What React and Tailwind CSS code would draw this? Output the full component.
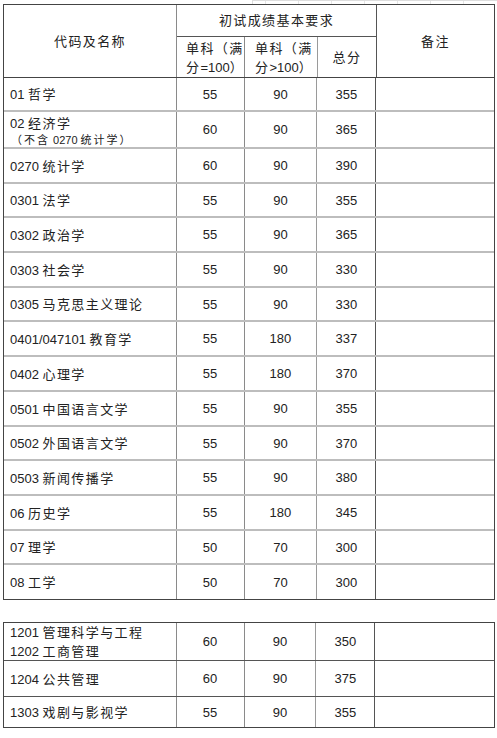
import React from "react";

const CJK = /([\u2E80-\u9FFF\uFF00-\uFFEF\u3000-\u303F]+)/;

function T({ s, tr = "tracking-[1.4px]" }) {
  return s.split(CJK).map((p, i) =>
    CJK.test(p) ? (
      <span key={i} className={tr}>
        {p}
      </span>
    ) : (
      <React.Fragment key={i}>{p}</React.Fragment>
    )
  );
}

const rows1 = [
  ["01 哲学", null, "55", "90", "355", "h-[34px]"],
  ["02 经济学", "（不含 0270 统计学）", "60", "90", "365", "h-[37px]"],
  ["0270 统计学", null, "60", "90", "390", "h-[35px]"],
  ["0301 法学", null, "55", "90", "355", "h-[34px]"],
  ["0302 政治学", null, "55", "90", "365", "h-[35px]"],
  ["0303 社会学", null, "55", "90", "330", "h-[35px]"],
  ["0305 马克思主义理论", null, "55", "90", "330", "h-[34px]"],
  ["0401/047101 教育学", null, "55", "180", "337", "h-[35px]"],
  ["0402 心理学", null, "55", "180", "370", "h-[35px]"],
  ["0501 中国语言文学", null, "55", "90", "355", "h-[35px]"],
  ["0502 外国语言文学", null, "55", "90", "370", "h-[34px]"],
  ["0503 新闻传播学", null, "55", "90", "380", "h-[35px]"],
  ["06 历史学", null, "55", "180", "345", "h-[35px]"],
  ["07 理学", null, "50", "70", "300", "h-[34px]"],
  ["08 工学", null, "50", "70", "300", "h-[35px]"],
];

const rows2 = [
  ["1201 管理科学与工程", "1202 工商管理", "60", "90", "350", "h-[38px]"],
  ["1204 公共管理", null, "60", "90", "375", "h-[36px]"],
  ["1303 戏剧与影视学", null, "55", "90", "355", "h-[31px]"],
];

function Row({ r, last, second }) {
  const [name, sub, a, b, c, h] = r;
  const sep = second
    ? last
      ? "border-b border-[#444]"
      : "border-b border-[#555]"
    : last
    ? "border-b border-[#444]"
    : "border-b-2 border-[#bdbdbd]";
  const small = sub && !second;
  return (
    <div className={`flex ${h} ${sep}`}>
      <div className="w-[173px] border-r border-[#8a8a8a] flex flex-col justify-center pl-[6px] pt-[1px] whitespace-nowrap">
        <div className="leading-[19px]">
          <T s={name} />
        </div>
        {sub && small && (
          <div className="text-[11px] leading-[14px] pl-[1px]">
            <T s={sub} tr="tracking-[2px]" />
          </div>
        )}
        {sub && !small && (
          <div className="leading-[19px]">
            <T s={sub} />
          </div>
        )}
      </div>
      <div className="w-[68px] border-r border-[#8a8a8a] flex items-center justify-center pt-[1px]">
        {a}
      </div>
      <div
        className={`${
          second ? "w-[72px]" : "w-[73px]"
        } border-r border-[#9a9a9a] flex items-center justify-center pt-[1px]`}
      >
        {b}
      </div>
      <div className="w-[59px] border-r border-[#555] flex items-center justify-center pt-[1px]">
        {c}
      </div>
      <div className={second ? "w-[119px]" : "w-[118px]"}></div>
    </div>
  );
}

export default function App() {
  return (
    <div
      className="w-[497px] h-[738px] bg-white overflow-hidden text-[13px] text-[#222]"
      style={{ fontFamily: '"Liberation Sans", "Noto Sans CJK SC", sans-serif' }}
    >
      {/* faint spreadsheet grid above */}
      <div className="h-[4px] flex pl-[252px]">
        <div className="flex-1 flex border-t border-l border-[#dedede]">
          <div className="w-[13px] border-r border-[#e6e6e6]"></div>
          <div className="w-[33px] border-r border-[#e6e6e6]"></div>
          <div className="w-[33px] border-r border-[#e6e6e6]"></div>
          <div className="w-[33px] border-r border-[#e6e6e6]"></div>
          <div className="w-[33px] border-r border-[#e6e6e6]"></div>
          <div className="w-[33px] border-r border-[#e6e6e6]"></div>
          <div className="w-[33px] border-r border-[#e6e6e6]"></div>
        </div>
      </div>

      {/* table 1 */}
      <div className="ml-[3px] w-[492px] border-l border-r border-t border-[#444]">
        <div className="flex h-[73px] border-b border-[#444]">
          <div className="w-[173px] border-r border-[#8a8a8a] flex items-center justify-center pt-[1px]">
            <T s="代码及名称" />
          </div>
          <div className="w-[200px] border-r border-[#555] flex flex-col">
            <div className="h-[34px] border-b border-[#555] flex items-center justify-center pt-[1px] whitespace-nowrap">
              <T s="初试成绩基本要求" />
            </div>
            <div className="flex-1 flex">
              <div className="w-[68px] border-r border-[#8a8a8a] pl-[9px] pt-[2px] leading-[19px] whitespace-nowrap">
                <div>
                  <T s="单科（满" />
                </div>
                <div>
                  <T s="分=100）" />
                </div>
              </div>
              <div className="w-[73px] border-r border-[#9a9a9a] pl-[10px] pt-[2px] leading-[19px] whitespace-nowrap">
                <div>
                  <T s="单科（满" />
                </div>
                <div>
                  <T s="分>100）" />
                </div>
              </div>
              <div className="flex-1 flex items-center justify-center pt-[2px]">
                <T s="总分" />
              </div>
            </div>
          </div>
          <div className="flex-1 flex items-center justify-center pt-[1px]">
            <T s="备注" />
          </div>
        </div>
        {rows1.map((r, i) => (
          <Row key={i} r={r} last={i === rows1.length - 1} />
        ))}
      </div>

      {/* table 2 */}
      <div className="mt-[22px] ml-[3px] w-[492px] border-l border-r border-t border-[#444]">
        {rows2.map((r, i) => (
          <Row key={i} r={r} second last={i === rows2.length - 1} />
        ))}
      </div>
    </div>
  );
}
